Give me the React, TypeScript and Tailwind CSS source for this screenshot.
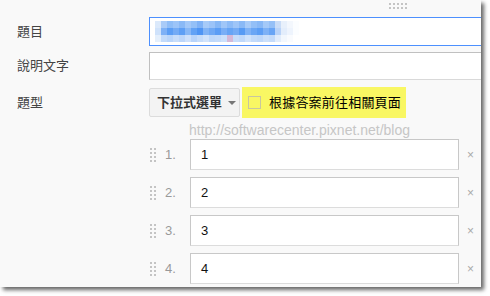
import { useState } from 'react'

const blur = [
  ['#dbe9fb', '#a9cbf8', '#8fbdf7', '#9cc4f8', '#8ab9f6', '#a3c8f8', '#94c0f7', '#7fb2f6', '#a6caf8', '#9bc3f8', '#86b7f6', '#a0c6f8', '#8dbbf7', '#9ec5f8', '#8ab9f6', '#a8cbf8', '#93bff7', '#88b8f6', '#a4c9f8', '#95c0f7', '#c9dcf7', '#e8f0fb', '#f3f7fd', '#fbfdff'],
  ['#cfe2fb', '#7eb1f6', '#5c9ef5', '#74abf5', '#5e9ff5', '#87b7f6', '#62a2f5', '#4f95f4', '#80b3f6', '#6ea8f5', '#5b9df5', '#79aef6', '#66a4f5', '#74abf5', '#579bf4', '#7fb2f6', '#6aa6f5', '#5c9ef5', '#7db1f6', '#69a5f5', '#b9d3f8', '#e3edfb', '#eef4fd', '#fbfdff'],
  ['#e4effc', '#c3dbfa', '#b9d5fa', '#c7ddfa', '#bcd6fa', '#cde0fb', '#b8d4fa', '#c5dcfa', '#d1e3fb', '#bed8fa', '#c2dafa', '#cbe0fb', '#d4b8d8', '#c6dcfa', '#bfd8fa', '#cfe2fb', '#c2dafa', '#bdd7fa', '#cadffa', '#c4dbfa', '#e1ecfb', '#f2f7fd', '#f9fbfe', '#ffffff'],
]

function Dots({ cols, rows }: { cols: number; rows: number }) {
  return (
    <div className="flex flex-col gap-[2px]">
      {Array.from({ length: rows }).map((_, r) => (
        <div key={r} className="flex gap-[2px]">
          {Array.from({ length: cols }).map((_, c) => (
            <div key={c} className="w-[2px] h-[2px] bg-[#c4c4c4]" />
          ))}
        </div>
      ))}
    </div>
  )
}

export default function App() {
  const [opcoes] = useState(['1', '2', '3', '4'])

  return (
    <div className="w-[490px] h-[296px] bg-white" style={{ fontFamily: '"Liberation Sans", "Noto Sans CJK TC", sans-serif' }}>
      <div className="relative w-[481px] h-[287px] bg-[#f9f9f9] overflow-hidden shadow-[3px_3px_4px_rgba(0,0,0,0.6)]">
        <div className="absolute left-[389px] top-[3px]">
          <Dots cols={5} rows={2} />
        </div>

        <div className="pt-[17px] flex flex-col">
          <div className="flex items-center h-[29px]">
            <div className="w-[149px] shrink-0 pl-[17px] text-[13px] text-[#444]">題目</div>
            <div className="w-[360px] h-[29px] shrink-0 bg-white border border-[#4d90fe] flex items-center pl-[5px]">
              <div className="flex flex-col">
                {blur.map((row, i) => (
                  <div key={i} className="flex">
                    {row.map((c, j) => (
                      <div key={j} className="w-[6px] h-[7px]" style={{ background: c }} />
                    ))}
                  </div>
                ))}
              </div>
            </div>
          </div>

          <div className="flex items-center h-[28px] mt-[6px]">
            <div className="w-[149px] shrink-0 pl-[17px] text-[13px] text-[#444]">說明文字</div>
            <div className="w-[360px] h-[28px] shrink-0 bg-white border border-[#c0c0c0] border-b-[#d9d9d9]" />
          </div>

          <div className="flex items-center h-[31px] mt-[7px]">
            <div className="w-[149px] shrink-0 pl-[17px] text-[13px] text-[#444]">題型</div>
            <div className="w-[91px] h-[29px] shrink-0 bg-[#f3f3f3] border border-[#dcdcdc] rounded-[2px] flex items-center pl-[7px] gap-[6px]">
              <span className="text-[13px] font-bold text-[#333]">下拉式選單</span>
              <span className="w-0 h-0 border-l-[4px] border-r-[4px] border-t-[4px] border-l-transparent border-r-transparent border-t-[#777]" />
            </div>
            <div className="ml-[2px] w-[164px] h-[31px] shrink-0 bg-[#f9f763] flex items-center pl-[6px] gap-[8px]">
              <div className="w-[13px] h-[13px] border border-[#c8c6a0] bg-[#f9f763]" />
              <span className="text-[13px] text-black tracking-[0.2px]">根據答案前往相關頁面</span>
            </div>
          </div>

          <div className="pl-[189px] text-[14px] leading-[16px] text-[#c6c6c6] mt-[4px] h-[16px]">
            http://softwarecenter.pixnet.net/blog
          </div>

          <div className="flex flex-col gap-[7px] mt-[1px]">
            {opcoes.map((o, i) => (
              <div key={i} className="flex items-center h-[31px]">
                <div className="w-[150px] shrink-0" />
                <Dots cols={2} rows={4} />
                <span className="ml-[9px] w-[25px] shrink-0 text-[13px] text-[#999]">{i + 1}.</span>
                <div className="w-[269px] h-[31px] shrink-0 bg-white border border-[#c8c8c8] border-b-[#dcdcdc] flex items-center pl-[10px] text-[13px] text-[#111]">
                  {o}
                </div>
                <span className="ml-[8px] text-[12px] text-[#aaa] leading-none">×</span>
              </div>
            ))}
          </div>
        </div>
      </div>
    </div>
  )
}
